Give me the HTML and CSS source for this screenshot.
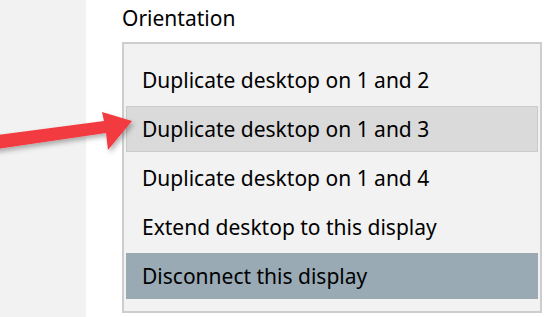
FILE: index.html
```html
<!DOCTYPE html>
<html lang="en">
<head>
  <meta charset="UTF-8">
  <meta name="viewport" content="width=device-width, initial-scale=1.0">
  <title>Orientation</title>
  <link rel="stylesheet" href="styles.css">
</head>
<body>
  <div class="side-panel"></div>
  <div class="settings">
    <div class="field-label">Orientation</div>
    <ul class="dropdown">
      <li class="option">Duplicate desktop on 1 and 2</li>
      <li class="option hover">Duplicate desktop on 1 and 3</li>
      <li class="option">Duplicate desktop on 1 and 4</li>
      <li class="option">Extend desktop to this display</li>
      <li class="option selected">Disconnect this display</li>
    </ul>
  </div>

  <svg class="callout-arrow" width="547" height="317" viewBox="0 0 547 317">
    <defs>
      <filter id="shadow" x="-10%" y="-50%" width="130%" height="200%">
        <feDropShadow dx="2" dy="3" stdDeviation="2.5" flood-color="#000" flood-opacity="0.3"/>
      </filter>
    </defs>
    <polygon filter="url(#shadow)" fill="#f23b3f"
      points="-10,136 104,121 102,112 132,121 108,150 106,133 -10,150"/>
  </svg>
</body>
</html>
```

FILE: styles.css
```css
body {
  margin: 0;
  padding: 0;
  width: 547px;
  height: 317px;
  display: flex;
  background-color: #fff;
  font-family: "Noto Sans", "Open Sans", sans-serif;
  color: #000;
  overflow: hidden;
  position: relative;
}
.side-panel {
  width: 86px;
  flex-shrink: 0;
  background-color: #f2f2f2;
}
.settings {
  padding: 4px 0 0 36px;
}
.field-label {
  font-size: 21px;
  line-height: 28px;
  margin-bottom: 10px;
}
.dropdown {
  list-style: none;
  margin: 0;
  padding: 13px 2px 12px 2px;
  box-sizing: border-box;
  width: 420px;
  background-color: #f2f2f2;
  border: 2px solid #cdcdcd;
  display: flex;
  flex-direction: column;
  gap: 3px;
}
.option {
  height: 46px;
  box-sizing: border-box;
  padding-left: 15px;
  font-size: 21px;
  line-height: 44px;
  border: 1px solid transparent;
}
.option.hover {
  background-color: #dadada;
  border-color: #cbcbcb;
}
.option.selected {
  background-color: #99aab5;
}
.callout-arrow {
  position: absolute;
  left: 0;
  top: 0;
  pointer-events: none;
}
```
